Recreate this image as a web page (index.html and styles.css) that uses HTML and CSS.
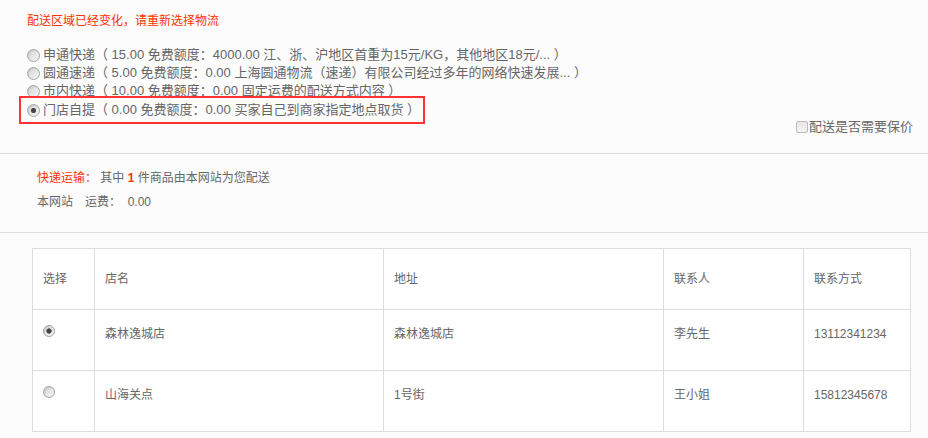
FILE: index.html
```html
<!DOCTYPE html>
<html lang="zh-CN">
<head>
    <meta charset="UTF-8">
    <meta name="viewport" content="width=device-width, initial-scale=1.0">
    <title>配送方式</title>
    <link rel="stylesheet" href="styles.css">
</head>
<body>

    <div class="ship-box">
        <p class="ship-tip">配送区域已经变化，请重新选择物流</p>

        <ul class="ship-list">
            <li><label><input class="radio" type="radio" name="shipping">申通快递（ 15.00 免费额度：4000.00 江、浙、沪地区首重为15元/KG，其他地区18元/... ）</label></li>
            <li><label><input class="radio" type="radio" name="shipping">圆通速递（ 5.00 免费额度：0.00 上海圆通物流（速递）有限公司经过多年的网络快速发展... ）</label></li>
            <li><label><input class="radio" type="radio" name="shipping">市内快递（ 10.00 免费额度：0.00 固定运费的配送方式内容 ）</label></li>
            <li class="ship-picked"><label><input class="radio" type="radio" name="shipping" checked>门店自提（ 0.00 免费额度：0.00 买家自己到商家指定地点取货 ）</label></li>
        </ul>

        <div class="insure">
            <label><input class="check" type="checkbox" name="insure">配送是否需要保价</label>
        </div>
    </div>

    <div class="ship-info">
        <p><span class="red">快递运输：</span> 其中 <b class="red">1</b> 件商品由本网站为您配送</p>
        <p>本网站<span class="gap"></span>运费：&nbsp; 0.00</p>
    </div>

    <div class="store-box">
        <table class="store-table">
            <colgroup>
                <col class="c-pick">
                <col class="c-name">
                <col class="c-addr">
                <col class="c-man">
                <col class="c-tel">
            </colgroup>
            <tr>
                <th>选择</th>
                <th>店名</th>
                <th>地址</th>
                <th>联系人</th>
                <th>联系方式</th>
            </tr>
            <tr>
                <td><input class="radio radio-sm" type="radio" name="store" checked></td>
                <td>森林逸城店</td>
                <td>森林逸城店</td>
                <td>李先生</td>
                <td>13112341234</td>
            </tr>
            <tr>
                <td><input class="radio radio-sm" type="radio" name="store"></td>
                <td>山海关点</td>
                <td>1号街</td>
                <td>王小姐</td>
                <td>15812345678</td>
            </tr>
        </table>
    </div>

</body>
</html>
```

FILE: styles.css
```css
body {
    margin: 0;
    background: #fcfcfc;
    color: #666;
    font: 13px/18px "Liberation Sans", "Noto Sans CJK SC", sans-serif;
}

p {
    margin: 0;
}

.red {
    color: #f30;
}

/* radio & checkbox */
.radio {
    appearance: none;
    -webkit-appearance: none;
    box-sizing: border-box;
    width: 13px;
    height: 13px;
    margin: 0 3px 0 0;
    border: 1px solid #a6a6a6;
    border-radius: 50%;
    background: linear-gradient(135deg, #d4d4d4, #f6f6f6);
    box-shadow: inset 1px 1px 1px rgba(0, 0, 0, .08);
    flex: none;
}

.radio:checked {
    background: radial-gradient(circle, #444 0 2px, #777 2.5px, transparent 3px),
                linear-gradient(135deg, #d4d4d4, #f6f6f6);
}

.radio-sm {
    display: block;
    width: 12px;
    height: 12px;
    margin: 0;
}

.check {
    appearance: none;
    -webkit-appearance: none;
    box-sizing: border-box;
    width: 12px;
    height: 12px;
    margin: 0 1px 0 0;
    border: 1px solid #bbb;
    border-radius: 2px;
    background: linear-gradient(#e6e6e6, #f4f4f4);
}

/* 配送方式 */
.ship-box {
    padding: 12px 15px 17px 27px;
    border-bottom: 1px solid #ddd;
}

.ship-tip {
    font-size: 12px;
    color: #f30;
}

.ship-list {
    list-style: none;
    margin: 16px 0 0;
    padding: 0;
}

.ship-list li {
    display: flex;
    height: 18px;
}

.ship-list label {
    display: flex;
    align-items: center;
}

.ship-list .ship-picked {
    position: relative;
    height: auto;
    margin: -4px 0 0 -8px;
}

.ship-picked label {
    padding: 3px 3px 3px 6px;
    border: 2px solid #f33;
    background: #fcfcfc;
}

.insure {
    display: flex;
    justify-content: flex-end;
    height: 18px;
    margin-top: -6px;
}

.insure label {
    display: flex;
    align-items: center;
}

/* 运输信息 */
.ship-info {
    padding: 15px 0 21px 37px;
    border-bottom: 1px solid #ddd;
    font-size: 12px;
}

.ship-info p + p {
    margin-top: 6px;
}

.gap {
    display: inline-block;
    width: 12px;
}

/* 门店列表 */
.store-box {
    padding: 15px 19px 0 32px;
}

.store-table {
    width: 878px;
    table-layout: fixed;
    border-collapse: collapse;
    background: #fff;
    font-size: 12px;
}

.c-pick { width: 62px; }
.c-name { width: 289px; }
.c-addr { width: 280px; }
.c-man  { width: 140px; }
.c-tel  { width: 107px; }

th, td {
    border: 1px solid #ddd;
    padding: 0 10px;
    text-align: left;
}

th {
    height: 60px;
    font-weight: normal;
}

td {
    height: 45px;
    padding-top: 15px;
    vertical-align: top;
}
```
